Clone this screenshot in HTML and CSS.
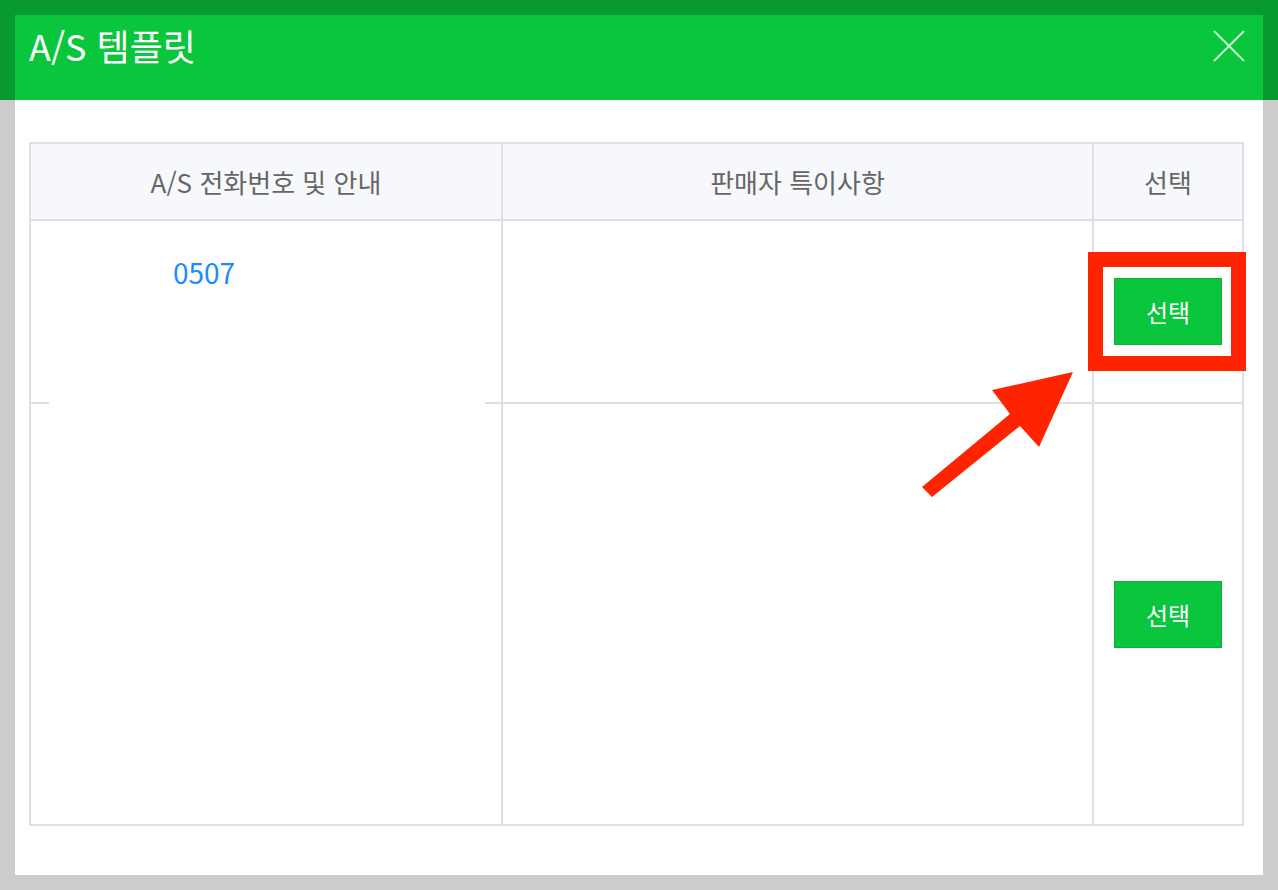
FILE: index.html
```html
<!DOCTYPE html>
<html lang="ko">
<head>
    <meta charset="UTF-8">
    <title>A/S 템플릿</title>
    <link rel="stylesheet" href="styles.css">
</head>
<body>
    <div class="modal">
        <div class="modal-header">
            <h1 class="modal-title">A/S 템플릿</h1>
            <button class="close-btn" type="button" aria-label="닫기">
                <svg width="32" height="32" viewBox="0 0 32 32">
                    <path d="M1 1 L31 31 M31 1 L1 31" stroke="#c9f2d3" stroke-width="2" fill="none"/>
                </svg>
            </button>
        </div>
        <div class="modal-body">
            <table class="as-table">
                <colgroup>
                    <col class="col-info">
                    <col class="col-note">
                    <col class="col-select">
                </colgroup>
                <thead>
                    <tr>
                        <th>A/S 전화번호 및 안내</th>
                        <th>판매자 특이사항</th>
                        <th>선택</th>
                    </tr>
                </thead>
                <tbody>
                    <tr class="row-first">
                        <td class="cell-info"><span class="phone">0507</span></td>
                        <td></td>
                        <td class="cell-select">
                            <span class="highlight"><button class="select-btn" type="button">선택</button></span>
                        </td>
                    </tr>
                    <tr class="row-second">
                        <td></td>
                        <td></td>
                        <td class="cell-select"><button class="select-btn" type="button">선택</button></td>
                    </tr>
                </tbody>
            </table>
        </div>
        <svg class="arrow" width="156" height="130" viewBox="0 0 156 130">
            <polygon points="153,2 119,77 100,56 12,127 2,117 90,44 72,20" fill="#ff2400"/>
        </svg>
    </div>
</body>
</html>
```

FILE: styles.css
```css
body {
    margin: 0;
    padding: 15px;
    height: 890px;
    box-sizing: border-box;
    font-family: "Noto Sans CJK KR", "Noto Sans", sans-serif;
    background: linear-gradient(to bottom, #089a2f 0, #089a2f 100px, #cccccc 100px);
}
.modal {
    position: relative;
    width: 1248px;
    height: 860px;
    background-color: #fff;
}
.modal-header {
    height: 85px;
    background-color: #0ac63c;
    display: flex;
    justify-content: space-between;
    align-items: flex-start;
    padding: 0 18px 0 14px;
}
.modal-title {
    margin: 5px 0 0;
    font-size: 36px;
    font-weight: normal;
    color: #fff;
    line-height: 50px;
}
.close-btn {
    margin-top: 15px;
    padding: 0;
    border: none;
    background: none;
    width: 32px;
    height: 32px;
    cursor: pointer;
}
.modal-body {
    padding: 42px 20px 0 14px;
}
.as-table {
    width: 1213px;
    border-collapse: collapse;
    table-layout: fixed;
    border: 2px solid #dedfe4;
}
.col-info {
    width: 472px;
}
.col-note {
    width: 591px;
}
.col-select {
    width: 150px;
}
.as-table th {
    height: 75px;
    padding: 0;
    background-color: #f7f8fc;
    color: #666;
    font-size: 26px;
    font-weight: normal;
    border: 2px solid #dedfe4;
}
.as-table td {
    padding: 0;
    border: 2px solid #dedfe4;
}
.row-first td {
    height: 181px;
}
.row-second td {
    height: 420px;
}
.cell-info {
    position: relative;
    vertical-align: top;
}
.row-first .cell-info::after {
    content: "";
    position: absolute;
    left: 18px;
    right: 16px;
    bottom: -2px;
    height: 2px;
    background-color: #fff;
}
.phone {
    display: block;
    padding: 27px 0 0 142px;
    color: #1a8cff;
    font-size: 28px;
    line-height: 48px;
}
.cell-select {
    text-align: center;
    vertical-align: middle;
}
.highlight {
    position: relative;
    display: inline-block;
    vertical-align: middle;
}
.highlight::before {
    content: "";
    position: absolute;
    top: -26px;
    left: -26px;
    right: -24px;
    bottom: -26px;
    border: 15px solid #ff2400;
}
.select-btn {
    display: inline-block;
    width: 108px;
    height: 67px;
    padding: 0;
    background-color: #0ac63c;
    border: 1px solid #16a93c;
    color: #fff;
    font-family: "Noto Sans CJK KR", "Noto Sans", sans-serif;
    font-size: 24px;
    vertical-align: middle;
    cursor: pointer;
}
.arrow {
    position: absolute;
    left: 905px;
    top: 355px;
}
```
